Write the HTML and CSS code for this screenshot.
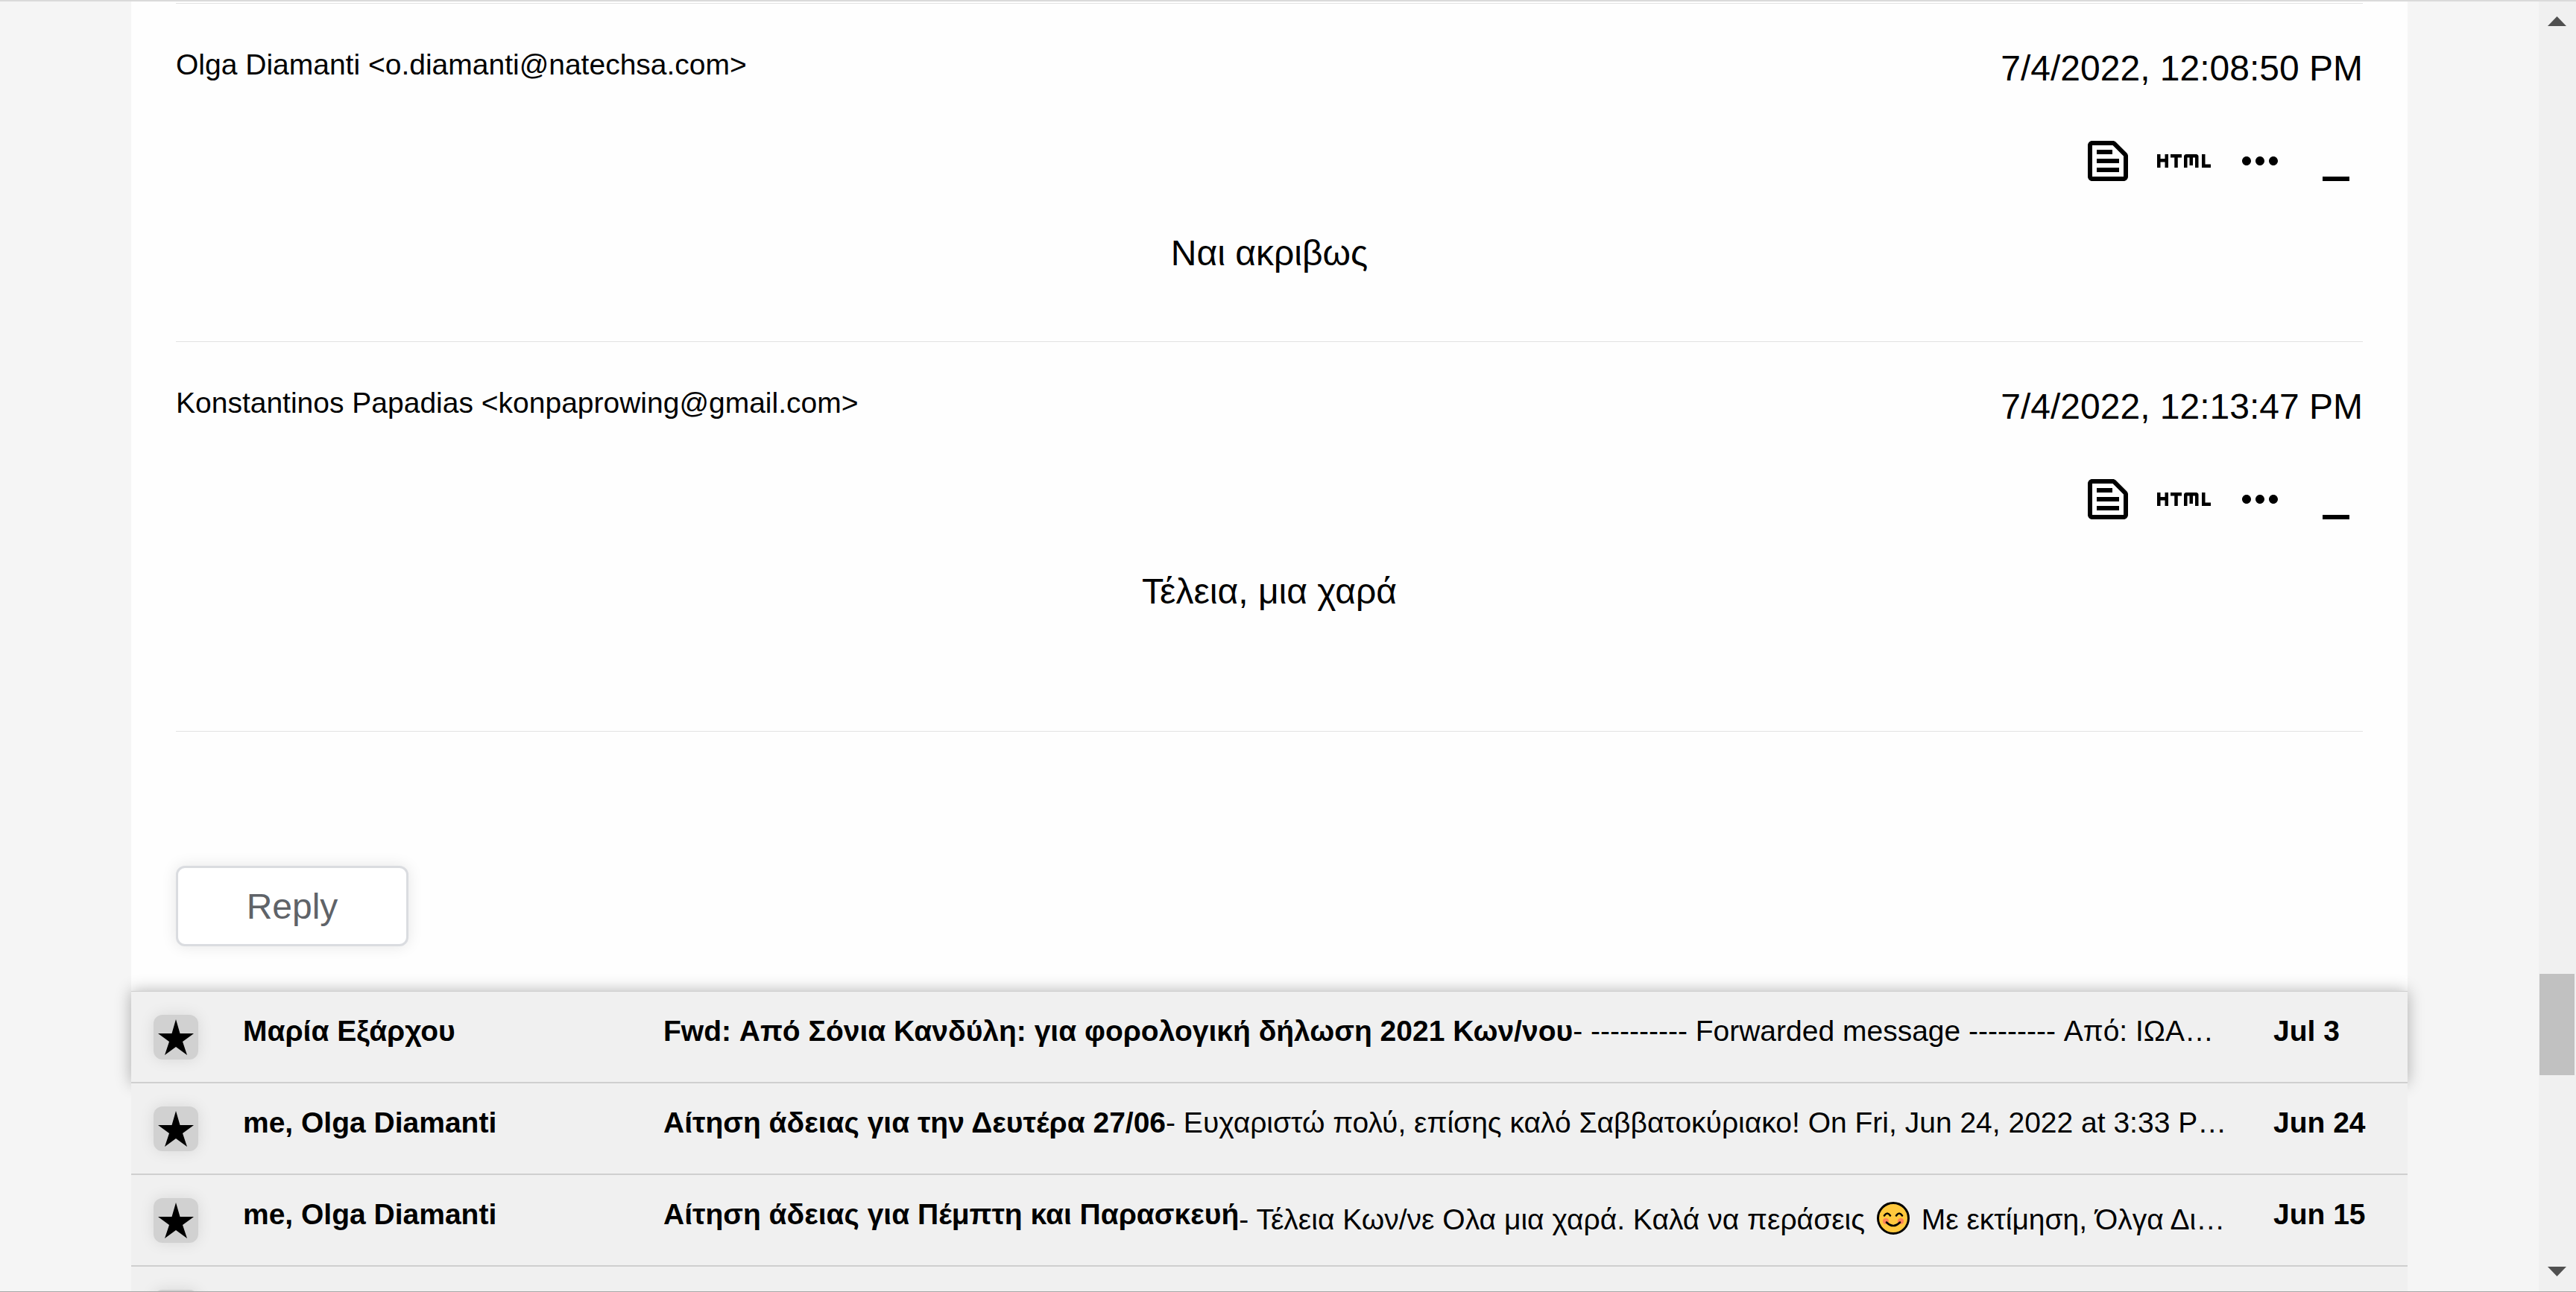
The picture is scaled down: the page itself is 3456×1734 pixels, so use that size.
FILE: index.html
```html
<!DOCTYPE html>
<html lang="en">
<head>
<meta charset="utf-8">
<title>Mail</title>
<link rel="stylesheet" href="styles.css">
</head>
<body>
<svg class="sprite" aria-hidden="true">
  <symbol id="i-text" viewBox="0 0 24 24"><path d="M14.17 5L19 9.83V19H5V5h9.17m0-2H5c-1.1 0-2 .9-2 2v14c0 1.1.9 2 2 2h14c1.1 0 2-.9 2-2V9.83c0-.53-.21-1.04-.59-1.41l-4.83-4.83c-.37-.38-.88-.59-1.41-.59zM7 15h10v2H7v-2zm0-4h10v2H7v-2zm0-4h7v2H7V7z"/></symbol>
  <symbol id="i-html" viewBox="0 0 24 24"><path d="M3.5 9H5v6H3.5v-2.5h-2V15H0V9h1.5v2h2V9zm14 0H13c-.55 0-1 .45-1 1v5h1.5v-4.5h1V14H16v-3.51h1V15h1.5v-5c0-.55-.45-1-1-1zM11 9H6v1.5h1.75V15h1.5v-4.5H11V9zm13 6v-1.5h-2.5V9H20v6h4z"/></symbol>
  <symbol id="i-more" viewBox="0 0 24 24"><path d="M6 10c-1.1 0-2 .9-2 2s.9 2 2 2 2-.9 2-2-.9-2-2-2zm12 0c-1.1 0-2 .9-2 2s.9 2 2 2 2-.9 2-2-.9-2-2-2zm-6 0c-1.1 0-2 .9-2 2s.9 2 2 2 2-.9 2-2-.9-2-2-2z"/></symbol>
  <symbol id="i-min" viewBox="0 0 24 24"><path d="M6 19h12v2H6z"/></symbol>
  <symbol id="i-star" viewBox="0 0 60 60"><path d="M30 6l5.5 19H54L39 36l6 18-15-11-15 11 6-18L6 25h18.500z"/></symbol>
</svg>
<div class="window">
  <main class="page">
    <article class="thread">
      <section class="message">
        <header class="message-head">
          <span class="from">Olga Diamanti &lt;o.diamanti@natechsa.com&gt;</span>
          <time class="when">7/4/2022, 12:08:50 PM</time>
        </header>
        <div class="tools">
          <button class="tool" aria-label="Plain text"><svg><use href="#i-text"/></svg></button>
          <button class="tool" aria-label="View as HTML"><svg><use href="#i-html"/></svg></button>
          <button class="tool" aria-label="More"><svg><use href="#i-more"/></svg></button>
          <button class="tool" aria-label="Minimize"><svg><use href="#i-min"/></svg></button>
        </div>
        <p class="text" lang="el">Ναι ακριβως</p>
      </section>
      <section class="message message-last">
        <header class="message-head">
          <span class="from">Konstantinos Papadias &lt;konpaprowing@gmail.com&gt;</span>
          <time class="when">7/4/2022, 12:13:47 PM</time>
        </header>
        <div class="tools">
          <button class="tool" aria-label="Plain text"><svg><use href="#i-text"/></svg></button>
          <button class="tool" aria-label="View as HTML"><svg><use href="#i-html"/></svg></button>
          <button class="tool" aria-label="More"><svg><use href="#i-more"/></svg></button>
          <button class="tool" aria-label="Minimize"><svg><use href="#i-min"/></svg></button>
        </div>
        <p class="text" lang="el">Τέλεια, μια χαρά</p>
      </section>
      <button class="reply">Reply</button>
    </article>
    <ul class="list">
      <li class="row row-active">
        <button class="star" aria-label="Star"><svg><use href="#i-star"/></svg></button>
        <span class="names">Μαρία Εξάρχου</span>
        <div class="summary"><b>Fwd: Από Σόνια Κανδύλη: για φορολογική δήλωση 2021 Κων/νου</b><span class="snippet">- ---------- Forwarded message --------- Από: ΙΩΑ…</span></div>
        <time class="date">Jul 3</time>
      </li>
      <li class="row">
        <button class="star" aria-label="Star"><svg><use href="#i-star"/></svg></button>
        <span class="names">me, Olga Diamanti</span>
        <div class="summary"><b>Αίτηση άδειας για την Δευτέρα 27/06</b><span class="snippet">- Ευχαριστώ πολύ, επίσης καλό Σαββατοκύριακο! On Fri, Jun 24, 2022 at 3:33 P…</span></div>
        <time class="date">Jun 24</time>
      </li>
      <li class="row">
        <button class="star" aria-label="Star"><svg><use href="#i-star"/></svg></button>
        <span class="names">me, Olga Diamanti</span>
        <div class="summary"><b>Αίτηση άδειας για Πέμπτη και Παρασκευή</b><span class="snippet">- Τέλεια Κων/νε Ολα μια χαρά. Καλά να περάσεις <svg class="emoji" viewBox="0 0 54 54" role="img" aria-label="Smiling face"><circle cx="27" cy="27" r="20.500" fill="#ffc83d" stroke="#000" stroke-width="3"/><circle cx="17" cy="31" r="4" fill="#ff8257"/><circle cx="37" cy="31" r="4" fill="#ff8257"/><path d="M15 23.500q4-6 8 0M31 23.500q4-6 8 0M18 32.500q9 9 18 0" fill="none" stroke="#000" stroke-width="2.500" stroke-linecap="round"/></svg> Με εκτίμηση, Όλγα Δι…</span></div>
        <time class="date">Jun 15</time>
      </li>
      <li class="row">
        <button class="star" aria-label="Star"><svg><use href="#i-star"/></svg></button>
      </li>
    </ul>
  </main>
  <div class="scrollbar" aria-hidden="true">
    <svg class="arrow" viewBox="0 0 47 47"><path d="M11 33l12.500-13 12.500 13z"/></svg>
    <div class="track-above"></div>
    <div class="thumb"></div>
    <div class="track-below"></div>
    <svg class="arrow" viewBox="0 0 47 47"><path d="M11 14l12.500 13 12.500-13z"/></svg>
  </div>
</div>
</body>
</html>
```

FILE: styles.css
```css
* { box-sizing: border-box; }

body {
  margin: 0;
  background: #f5f5f5;
  color: #000;
  font-family: "Liberation Sans", Arial, sans-serif;
  font-size: 39px;
  line-height: 45px;
}

button {
  padding: 0;
  border: 0;
  background: none;
  color: inherit;
  font: inherit;
}

.sprite { display: none; }

.window {
  display: flex;
  height: 100vh;
  overflow: hidden;
  border-top: 2px solid #dadada;
  border-bottom: 1px solid #a8a8a8;
}

.page {
  flex: 1;
  min-width: 0;
  padding: 0 176px;
}

.thread {
  padding: 2px 60px 60px;
  background: #fefefe;
}

.message {
  height: 454px;
  padding-top: 59px;
  border-top: 1px solid #e2e2e2;
}

.message-last {
  height: 524px;
  border-bottom: 1px solid #e2e2e2;
}

.message-head {
  display: flex;
  justify-content: space-between;
  align-items: flex-start;
}

.when {
  font-size: 48px;
  line-height: 56px;
}

.tools {
  display: flex;
  justify-content: flex-end;
  gap: 30px;
  margin-top: 60px;
}

.tool,
.tool svg {
  display: block;
  width: 72px;
  height: 72px;
}

.text {
  margin: 60px 0 0;
  font-size: 48px;
  line-height: 56px;
  text-align: center;
}

.reply {
  display: block;
  width: 312px;
  height: 108px;
  margin-top: 180px;
  border: 3px solid #dadce0;
  border-radius: 12px;
  background: #fff;
  box-shadow: 0 0 20px rgba(0, 0, 0, 0.1);
  color: #5f6368;
  font-size: 48px;
}

.list {
  margin: 0;
  padding: 0;
  list-style: none;
}

.row {
  display: flex;
  align-items: flex-start;
  height: 123px;
  padding: 31px 54px 0 30px;
  border-bottom: 2px solid #cfcfcf;
  background: #f0f0f0;
  line-height: 43px;
}

.row-active {
  height: 124px;
  border-top: 1px solid #cfcfcf;
  box-shadow: 0 0 20px rgba(0, 0, 0, 0.3);
}

.star {
  flex: none;
  width: 60px;
  height: 60px;
  border-radius: 12px;
  background: #d1d1d1;
  box-shadow: 0 0 20px rgba(0, 0, 0, 0.1);
}

.star svg {
  display: block;
  width: 60px;
  height: 60px;
}

.names {
  flex: none;
  width: 624px;
  padding-left: 60px;
  font-weight: bold;
}

.summary {
  display: flex;
  flex: 1;
  min-width: 0;
  margin-right: 60px;
  white-space: nowrap;
}

.snippet {
  flex: 1;
  min-width: 0;
  overflow: hidden;
  text-overflow: ellipsis;
}

.emoji {
  width: 54px;
  height: 54px;
  vertical-align: -12px;
}

.date {
  flex: none;
  width: 126px;
  font-weight: bold;
  white-space: nowrap;
}

.scrollbar {
  display: flex;
  flex-direction: column;
  flex: none;
  width: 50px;
  padding: 0 2px 0 1px;
  background: #f0f0f0;
}

.arrow {
  flex: none;
  height: 47px;
  fill: #505050;
}

.thumb {
  flex: 136;
  background: #c1c1c1;
}

.track-above { flex: 1258; }
.track-below { flex: 243; }
```
